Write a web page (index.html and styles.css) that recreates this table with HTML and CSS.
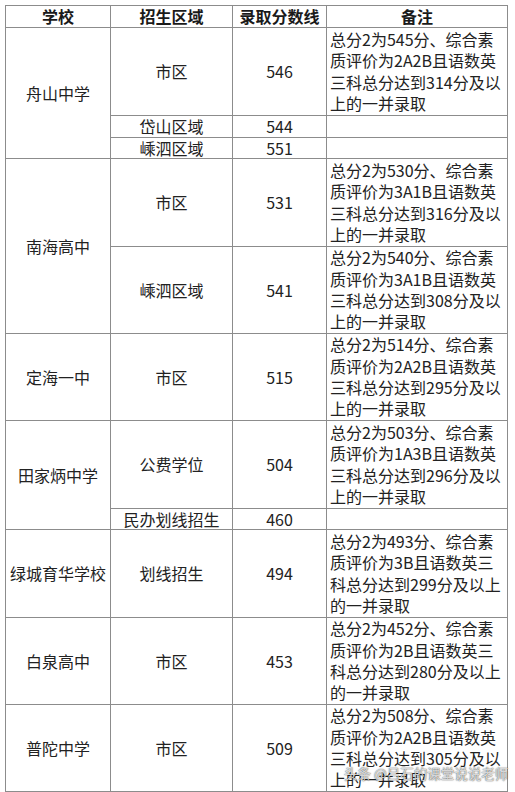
FILE: index.html
```html
<!DOCTYPE html>
<html lang="zh-CN">
<head>
<meta charset="utf-8">
<title>录取分数线</title>
<link rel="stylesheet" href="styles.css">
</head>
<body>
<div class="page">
<table class="scores">
  <colgroup>
    <col class="c1"><col class="c2"><col class="c3"><col class="c4">
  </colgroup>
  <thead>
    <tr class="h22"><th>学校</th><th>招生区域</th><th>录取分数线</th><th>备注</th></tr>
  </thead>
  <tbody>
    <tr class="h88"><td rowspan="3">舟山中学</td><td>市区</td><td>546</td><td class="note">总分2为545分、综合素<br>质评价为2A2B且语数英<br>三科总分达到314分及以<br>上的一并录取</td></tr>
    <tr class="h22"><td>岱山区域</td><td>544</td><td class="note"></td></tr>
    <tr class="h21"><td>嵊泗区域</td><td>551</td><td class="note"></td></tr>
    <tr class="h88"><td rowspan="2">南海高中</td><td>市区</td><td>531</td><td class="note">总分2为530分、综合素<br>质评价为3A1B且语数英<br>三科总分达到316分及以<br>上的一并录取</td></tr>
    <tr class="h87"><td>嵊泗区域</td><td>541</td><td class="note">总分2为540分、综合素<br>质评价为3A1B且语数英<br>三科总分达到308分及以<br>上的一并录取</td></tr>
    <tr class="h87"><td>定海一中</td><td>市区</td><td>515</td><td class="note">总分2为514分、综合素<br>质评价为2A2B且语数英<br>三科总分达到295分及以<br>上的一并录取</td></tr>
    <tr class="h88"><td rowspan="2">田家炳中学</td><td>公费学位</td><td>504</td><td class="note">总分2为503分、综合素<br>质评价为1A3B且语数英<br>三科总分达到296分及以<br>上的一并录取</td></tr>
    <tr class="h21"><td>民办划线招生</td><td>460</td><td class="note"></td></tr>
    <tr class="h88"><td>绿城育华学校</td><td>划线招生</td><td>494</td><td class="note">总分2为493分、综合素<br>质评价为3B且语数英三<br>科总分达到299分及以上<br>的一并录取</td></tr>
    <tr class="h87"><td>白泉高中</td><td>市区</td><td>453</td><td class="note">总分2为452分、综合素<br>质评价为2B且语数英三<br>科总分达到280分及以上<br>的一并录取</td></tr>
    <tr class="h87"><td>普陀中学</td><td>市区</td><td>509</td><td class="note">总分2为508分、综合素<br>质评价为2A2B且语数英<br>三科总分达到305分及以<br>上的一并录取</td></tr>
  </tbody>
</table>
<div class="watermark">头条 @吕石的课堂说说老师</div>
</div>
</body>
</html>
```
FILE: styles.css
```css
html, body {
  margin: 0;
  padding: 0;
  background: #ffffff;
}
.page {
  position: relative;
  width: 515px;
  height: 792px;
  padding: 5px 0 0 5px;
  box-sizing: border-box;
  overflow: hidden;
}
.scores {
  border-collapse: collapse;
  table-layout: fixed;
  width: 502px;
  font-family: "Noto Sans CJK SC", "Noto Sans CJK TC", "Noto Sans CJK JP", sans-serif;
  font-size: 16px;
  color: #222222;
}
.c1 { width: 105px; }
.c2 { width: 122px; }
.c3 { width: 94px; }
.c4 { width: 181px; }
.scores th,
.scores td {
  border: 1px solid #8c8c8c;
  padding: 0;
  text-align: center;
  vertical-align: middle;
  line-height: 19px;
  white-space: nowrap;
}
.scores th {
  font-weight: bold;
  color: #1a1a1a;
}
.scores td.note {
  text-align: left;
  padding-left: 3px;
  line-height: 21.4px;
}
.h22 { height: 22px; }
.h21 { height: 21px; }
.h87 { height: 87px; }
.h88 { height: 88px; }
.watermark {
  position: absolute;
  left: 344px;
  top: 764px;
  font-family: "Noto Sans CJK SC", sans-serif;
  font-size: 13.5px;
  line-height: 18px;
  color: rgba(255, 255, 255, 0.8);
  text-shadow: 0 0 1px rgba(0, 0, 0, 0.75), 0 0 2px rgba(0, 0, 0, 0.35);
  white-space: nowrap;
}
```
